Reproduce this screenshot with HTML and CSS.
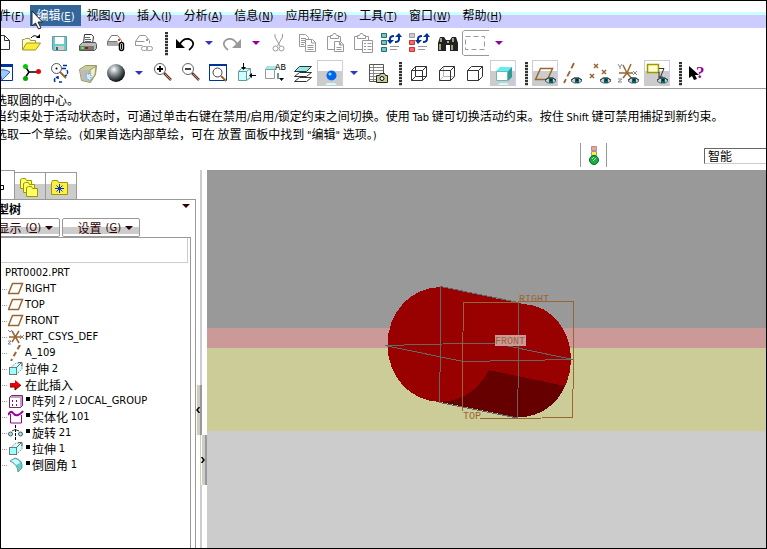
FILE: index.html
```html
<!DOCTYPE html>
<html lang="zh-CN">
<head>
  <meta charset="utf-8">
  <meta name="viewport" content="width=device-width, initial-scale=1.0">
  <title>PRT0002</title>
  <link rel="stylesheet" href="styles.css">
</head>
<body>

<!-- Shared shapes -->
<svg class="defs" width="0" height="0" aria-hidden="true">
  <defs>
    <radialGradient id="ball" cx="38%" cy="30%" r="70%">
      <stop offset="0" stop-color="#fff"/><stop offset=".35" stop-color="#9aa3a8"/><stop offset=".75" stop-color="#3c4448"/><stop offset="1" stop-color="#111"/>
    </radialGradient>
    <g id="eye">
      <path d="M0 3L3 0h5l3 3-3 2H3z" fill="#ccc" stroke="#666"/>
      <path d="M0 2L3 0h5l3 2" fill="none" stroke="#333"/>
      <rect x="4" y="0" width="4" height="5" fill="#066"/><rect x="5" y="1" width="2" height="2" fill="#033"/>
    </g>
    <g id="lens">
      <path d="M16 15l7 7" stroke="#633" stroke-width="2.500"/><path d="M17 16l6 6" stroke="#c96" stroke-width="1"/>
      <circle cx="12" cy="11" r="5.500" fill="#fff" stroke="#666"/>
    </g>
    <g id="sync">
      <path d="M13 14v-3q0-3 4-3" fill="none" stroke="#039" stroke-width="2"/><path d="M10 12h7l-4 4z" fill="#039"/>
      <path d="M22 7v4q0 3-4 3" fill="none" stroke="#039" stroke-width="2"/><path d="M18 9h7l-3-4z" fill="#039"/>
      <path d="M13 18.500h9M13 21.500h7" stroke="#999"/>
    </g>
    <g id="plane"><path d="M4.500 2.500h10l-4 10h-10z" fill="none" stroke="#963" stroke-width="1.500"/></g>
    <g id="extrude">
      <path d="M2 7l6-5h6v6l-5 5" fill="#cff" stroke="#999" stroke-dasharray="2 1"/>
      <rect x="1.500" y="6.500" width="7" height="7" fill="#9ff" stroke="#777"/>
      <path d="M8 7l5-5M10 1.500h4v4" fill="none" stroke="#666"/>
    </g>
  </defs>
</svg>

<div class="window">

  <!-- Menu bar -->
  <nav class="menubar">
    <button class="menu">文件<span class="latin">(<u>F</u>)</span></button>
    <button class="menu active">编辑<span class="latin">(<u>E</u>)</span></button>
    <button class="menu">视图<span class="latin">(<u>V</u>)</span></button>
    <button class="menu">插入<span class="latin">(<u>I</u>)</span></button>
    <button class="menu">分析<span class="latin">(<u>A</u>)</span></button>
    <button class="menu">信息<span class="latin">(<u>N</u>)</span></button>
    <button class="menu">应用程序<span class="latin">(<u>P</u>)</span></button>
    <button class="menu">工具<span class="latin">(<u>T</u>)</span></button>
    <button class="menu">窗口<span class="latin">(<u>W</u>)</span></button>
    <button class="menu">帮助<span class="latin">(<u>H</u>)</span></button>
    <svg class="cursor" width="13" height="20"><path d="M1 1v15l3.500-3 3 6 2.500-1-3-6h4.500z" fill="#fff" stroke="#222"/></svg>
  </nav>

  <!-- Toolbar: file and edit -->
  <div class="toolbar">
    <button class="tool" aria-label="新建"><svg viewBox="0 0 28 30"><path d="M6.500 7.500h9l5 5v9h-14zM15.500 7.500v5h5" fill="#fff" stroke="#333"/></svg></button>
    <button class="tool" aria-label="打开"><svg viewBox="0 0 28 30"><path d="M5.500 21.500v-10h2l1-1h4l1 2h5v3" fill="#ffc" stroke="#993"/><path d="M5.500 22l4-7h14l-5 7z" fill="#fe3" stroke="#993"/><path d="M14 10q3-4 7-1" fill="none" stroke="#000"/><path d="M19 10h4V6z"/></svg></button>
    <button class="tool" aria-label="保存"><svg viewBox="0 0 28 30"><path d="M7.500 8.500h14v14h-13l-1-1z" fill="#6cc" stroke="#699"/><rect x="10" y="9" width="9" height="7" fill="#fff"/><rect x="10" y="18" width="9" height="4" fill="#ccc"/><rect x="11" y="19" width="2" height="3" fill="#366"/></svg></button>
    <button class="tool" aria-label="打印"><svg viewBox="0 0 28 30"><path d="M10.500 15.500l1-9h7l2 2-1 7z" fill="#fff" stroke="#333"/><path d="M12 9.500h5M12 11.500h6M12 13.500h6" stroke="#666"/><path d="M6.500 17.500l3-3h13l1 2v4l-2 2h-15z" fill="#bbb" stroke="#555"/><path d="M7 18h14v4H7z" fill="#777"/><rect x="8" y="19" width="3" height="2" fill="#3f3"/><rect x="12" y="19" width="3" height="2" fill="#c00"/></svg></button>
    <button class="tool" aria-label="附加"><svg viewBox="0 0 28 30"><path d="M6.500 17.500v-4l4-6h6l4 5v3M6.500 13.500h10" fill="#fff" stroke="#777"/><path d="M7 14h9l3 2v2H7z" fill="#aaa"/><rect x="17" y="11" width="2" height="2" fill="#e30"/><rect x="18.500" y="14.500" width="4" height="8" rx="2" fill="#fff" stroke="#000" stroke-width="1.500"/><path d="M20.500 16v5" stroke="#000"/></svg></button>
    <button class="tool" aria-label="链接"><svg viewBox="0 0 28 30"><path d="M6.500 17.500v-4l4-6h6l4 5v3M6.500 13.500h9M6.500 17.500h7" fill="none" stroke="#999"/><rect x="17" y="11" width="2" height="2" fill="#999"/><rect x="12.500" y="18.500" width="6" height="4" rx="2" fill="#fff" stroke="#999"/><rect x="17.500" y="18.500" width="6" height="4" rx="2" fill="none" stroke="#999"/></svg></button>
    <span class="grip"></span>
    <button class="tool" aria-label="撤消"><svg viewBox="0 0 28 30"><path d="M9 16q3-6 9-5 5 2 4 6-1 3-4 5" fill="none" stroke="#000" stroke-width="1.800"/><path d="M5 11v9h9z"/></svg></button>
    <button class="drop" aria-label="撤消列表"></button>
    <button class="tool" aria-label="重做"><svg viewBox="0 0 28 30"><path d="M19 16q-3-6-9-5-5 2-4 6 1 3 4 5" fill="none" stroke="#999" stroke-width="1.800"/><path d="M23 11v9h-9z" fill="#999"/></svg></button>
    <button class="drop purple" aria-label="重做列表"></button>
    <button class="tool" aria-label="剪切"><svg viewBox="0 0 28 30" fill="none" stroke="#999"><path d="M10 6v3l5 9M17.500 6v3l-5 9"/><circle cx="10.500" cy="20.500" r="2.500"/><circle cx="16.500" cy="20.500" r="2.500"/></svg></button>
    <button class="tool" aria-label="复制"><svg viewBox="0 0 28 30" fill="#fff" stroke="#999"><path d="M6.500 6.500h6l3 3v9h-9z"/><path d="M8 10.500h5M8 12.500h6M8 14.500h6M8 16.500h3"/><path d="M12.500 11.500h7l3 3v9h-10zM18.500 12v3h4"/><path d="M14.500 17.500h6M14.500 19.500h6M14.500 21.500h6"/></svg></button>
    <button class="tool" aria-label="粘贴"><svg viewBox="0 0 28 30" fill="#fff" stroke="#999"><path d="M6.500 8.500h13v13h-13z"/><path d="M9.500 10.500v-3h2l1-2h2l1 2h2v3z"/><path d="M13.500 13.500h6l3 3v7h-9zM18.500 14v3h4M15.500 19.500h5M15.500 21.500h5"/></svg></button>
    <button class="tool" aria-label="选择性粘贴"><svg viewBox="0 0 28 30" fill="#fff" stroke="#999"><path d="M5.500 8.500h14v13h-14z"/><path d="M8.500 10.500v-3h2l1-2h2l1 2h2v3z"/><path d="M13.500 12.500h10v12h-10z"/><path d="M15 15.500h2M15 18.500h2M15 21.500h2M18.500 15.500h4M18.500 18.500h4M18.500 21.500h4"/></svg></button>
    <button class="tool" aria-label="再生"><svg viewBox="0 0 28 30"><path d="M4.500 5.500h5v4h-5zM4.500 12.500h5v4h-5zM4.500 19.500h5v4h-5z" fill="#6cc" stroke="#366"/><use href="#sync"/></svg></button>
    <button class="tool" aria-label="再生管理器"><svg viewBox="0 0 28 30"><path d="M4.500 5.500h5v4h-5z" fill="#ccc" stroke="#999"/><path d="M4.500 12.500h5v4h-5zM4.500 19.500h5v4h-5z" fill="#f66" stroke="#c33"/><use href="#sync"/></svg></button>
    <button class="tool" aria-label="查找"><svg viewBox="0 0 28 30"><path d="M7 9h4l2 3h4l2-3h4l2 6v8h-8v-6h-4v6H5v-8z" fill="#222"/><path d="M8 10v4M7 16v6M20 10v4M19 17v5" stroke="#cc9" stroke-width="1.500"/><path d="M14 13h2v2h-2z" fill="#aaa"/></svg></button>
    <button class="tool" aria-label="选取框"><svg viewBox="0 0 28 30" fill="none" stroke="#999"><path d="M28 2.500H3l-1.500 1.500v22L3 27.500h25"/><path d="M4.500 8.500h19v13h-19z" stroke-dasharray="5 3"/></svg></button>
    <button class="drop purple" aria-label="选取框列表"></button>
  </div>

  <!-- Toolbar: view and datum display -->
  <div class="toolbar">
    <button class="tool" aria-label="草绘"><svg viewBox="0 0 28 30"><path d="M5.500 7.500h18v15h-18z" fill="#fff" stroke="#039"/><path d="M5 6h19v3H5z" fill="#039"/><path d="M9 13q6-3 12 1l-8 8q-1-6-4-9z" fill="#9cf" stroke="#36c"/></svg></button>
    <button class="tool" aria-label="连接"><svg viewBox="0 0 28 30"><path d="M8 8l4 6-4 6M12 14h8" fill="none" stroke="#000" stroke-width="1.500"/><circle cx="8.500" cy="8.500" r="2.500" fill="#0c0"/><circle cx="8.500" cy="20.500" r="2.500" fill="#0a0"/><circle cx="21.500" cy="13.500" r="2.500" fill="#e00"/></svg></button>
    <button class="tool" aria-label="重画"><svg viewBox="0 0 28 30"><circle cx="11.500" cy="10.500" r="5" fill="#fff" stroke="#555"/><circle cx="11.500" cy="10.500" r="1"/><path d="M15 14l6 6" stroke="#963" stroke-width="2"/><path d="M18 7.500h5M17 10.500h5M22 12q2 4-2 6M10 24q-2-4 3-5M13 18v3M14 24h3" fill="none" stroke="#039" stroke-width="1.500" stroke-dasharray="4 1"/></svg></button>
    <button class="tool" aria-label="外观"><svg viewBox="0 0 28 30"><path d="M6.500 11.500l6-4h11l-1 9-5 8-9-2z" fill="#cc9" stroke="#996"/><path d="M7 12h10v11l-8-1z" fill="#bbb"/><path d="M17 12l6-4-1 9-5 6z" fill="#eec" stroke="#996"/><path d="M13 16h5v7l-4-2z" fill="#cef" stroke="#69c" stroke-dasharray="1 1"/></svg></button>
    <button class="tool" aria-label="外观库"><svg viewBox="0 0 28 30"><circle cx="15" cy="15" r="9" fill="url(#ball)"/></svg></button>
    <button class="drop" aria-label="外观列表"></button>
    <button class="tool" aria-label="放大"><svg viewBox="0 0 28 30"><use href="#lens"/><path d="M9 11h6M12 8v6" stroke="#000" stroke-width="1.800"/></svg></button>
    <button class="tool" aria-label="缩小"><svg viewBox="0 0 28 30"><use href="#lens"/><path d="M9 11h6" stroke="#000" stroke-width="1.500"/></svg></button>
    <button class="tool" aria-label="重新调整"><svg viewBox="0 0 28 30"><path d="M5.500 6.500h17v16h-17z" fill="#fff" stroke="#039"/><path d="M5 6h18v2H5z" fill="#039"/><circle cx="13.500" cy="14.500" r="4.500" fill="#fff" stroke="#444"/><path d="M17 18l5 5" stroke="#963" stroke-width="2"/></svg></button>
    <button class="tool" aria-label="重定向"><svg viewBox="0 0 28 30"><path d="M6.500 13.500h8v9h-8zM6.500 13.500l3-3h9l-4 3M14.500 22.500l4-3v-9" fill="#cff" stroke="#699"/><path d="M11.500 5v6M19 17.500h5" stroke="#000"/><path d="M9 9h5l-2.500 3zM20 15v5l-3-2.500z"/></svg></button>
    <button class="tool" aria-label="保存的视图"><svg viewBox="0 0 28 30"><path d="M5.500 11.500h9v9h-9zM5.500 11.500l2-3h7" fill="#fff" stroke="#999"/><path d="M6 11h9l2-3H8z" fill="#9ee"/><path d="M17 15h2v6h-2z" fill="#699"/><text class="icon-text" x="15" y="12">AB</text><path d="M19 20h5l-2.500 3z"/></svg></button>
    <button class="tool" aria-label="层"><svg viewBox="0 0 28 30" stroke="#333"><path d="M6.500 23.500l5-4h12l-5 4z" fill="#fff"/><path d="M6.500 18.500l5-4h12l-5 4z" fill="#fff"/><path d="M6.500 13.500l5-5h12l-5 5z" fill="#8ee"/></svg></button>
    <button class="tool pressed" aria-label="视图管理器"><svg viewBox="0 0 28 30"><path d="M9 27l2-2h8l2 2z" fill="#cff"/><circle cx="15.500" cy="17.500" r="5" fill="#06e"/><circle cx="14" cy="16" r="1.500" fill="#9df"/></svg></button>
    <button class="drop" aria-label="视图列表"></button>
    <button class="tool" aria-label="快照"><svg viewBox="0 0 28 30"><path d="M6.500 6.500h14v17h-14z" fill="#fff" stroke="#555"/><path d="M7 9.500h13M7 12.500h13M7 15.500h13M7 18.500h8M7 21.500h6M10.500 7v16" stroke="#888"/><path d="M13.500 17.500h3l1-2h4l1 2h2v7h-11z" fill="#cc9" stroke="#222"/><circle cx="19" cy="20.500" r="2" fill="#fff" stroke="#000"/></svg></button>
    <span class="grip"></span>
    <button class="tool" aria-label="线框"><svg viewBox="0 0 28 30" fill="none" stroke="#333"><path d="M6.500 12.500h11v10h-11zM6.500 12.500l4-4h11l-4 4M17.500 22.500l4-4v-10M10.500 8.500v10h11M10.500 18.500l-4 4"/></svg></button>
    <button class="tool" aria-label="隐藏线"><svg viewBox="0 0 28 30" fill="none" stroke="#333"><path d="M10.500 8.500v10h11M10.500 18.500l-4 4" stroke="#bbb"/><path d="M6.500 12.500h11v10h-11zM6.500 12.500l4-4h11l-4 4M17.500 22.500l4-4v-10"/></svg></button>
    <button class="tool" aria-label="无隐藏线"><svg viewBox="0 0 28 30" fill="none" stroke="#333"><path d="M6.500 12.500h11v10h-11zM6.500 12.500l4-4h11l-4 4M17.500 22.500l4-4v-10"/></svg></button>
    <button class="tool pressed" aria-label="着色"><svg viewBox="0 0 28 30"><path d="M7 13l4-4h12l-4 4z" fill="#6ee"/><path d="M7.500 13.500h11v9h-11z" fill="#fff" stroke="#6bb"/><path d="M19 13l4-4v10l-4 4z" fill="#399"/><path d="M9 27h11l-2-2h-7z" fill="#cff"/></svg></button>
    <span class="grip"></span>
    <button class="tool pressed" aria-label="基准平面"><svg viewBox="0 0 28 30"><path d="M9.500 10.500h12l-5 11h-12z" fill="none" stroke="#963" stroke-width="1.500"/><use href="#eye" x="14" y="20"/></svg></button>
    <button class="tool" aria-label="基准轴"><svg viewBox="0 0 28 30"><path d="M15 5L5 25" stroke="#963" stroke-width="1.800" stroke-dasharray="6 3"/><use href="#eye" x="12" y="20"/></svg></button>
    <button class="tool" aria-label="基准点"><svg viewBox="0 0 28 30"><path d="M7 6l4 4M11 6l-4 4M15 12l4 4M19 12l-4 4M3 16l4 4M7 16l-4 4" stroke="#963" stroke-width="1.500"/><use href="#eye" x="13" y="20"/></svg></button>
    <button class="tool" aria-label="坐标系"><svg viewBox="0 0 28 30"><path d="M12 15l4-9M12 15l-4-8M12 15H4M12 15l6 7M12 15l-4 5M12 15h6" stroke="#963" stroke-width="1.500"/><path d="M3 6l2 3 2-3M5 9v2M18 13l4 4M22 13l-4 4M3 21h4l-4 3h4" fill="none" stroke="#888"/><use href="#eye" x="13" y="20"/></svg></button>
    <button class="tool pressed" aria-label="注释显示"><svg viewBox="0 0 28 30"><path d="M4.500 6.500h11v8h-11z" fill="#ffc" stroke="#990" stroke-width="1.500"/><path d="M16 10.500h5L17 20M16 14v6M16 19h4" fill="none" stroke="#333"/><use href="#eye" x="14" y="20"/></svg></button>
    <span class="grip"></span>
    <button class="tool" aria-label="上下文帮助"><svg viewBox="0 0 28 30"><path d="M4 8v12l3-2 2 4 3-1-2-4h4z"/><text class="help-text" x="11" y="20">?</text></svg></button>
  </div>

  <!-- Prompt messages -->
  <div class="messages">
    <p>选取圆的中心。</p>
    <p>当约束处于活动状态时，可通过单击右键在禁用<span class="latin">/</span>启用<span class="latin">/</span>锁定约束之间切换。使用 <span class="latin">Tab</span> 键可切换活动约束。按住 <span class="latin">Shift</span> 键可禁用捕捉到新约束。</p>
    <p>选取一个草绘。<span class="latin">(</span>如果首选内部草绘，可在 放置 面板中找到 <span class="latin">"</span>编辑<span class="latin">"</span> 选项。<span class="latin">)</span></p>
  </div>

  <div class="statusbar">
    <span class="light">
      <svg width="12" height="20" viewBox="0 0 12 20"><path d="M3.500.500h5v4h-5z" fill="#f99" stroke="#999"/><path d="M3.500 5.500h5v4h-5z" fill="#fe3" stroke="#999"/><circle cx="6" cy="14" r="4.500" fill="#2a4" stroke="#063"/><path d="M4 13l2-2M5 15l3-3" stroke="#9e9"/></svg>
    </span>
    <select class="filter" aria-label="过滤器"><option>智能</option></select>
  </div>

  <!-- Work area -->
  <div class="work">
    <aside class="side">
      <div class="tabs">
        <button class="tab current" aria-label="模型树"><svg width="28" height="25"><path d="M15.500 12.500h4v4h-4z" fill="#fff" stroke="#000"/></svg></button>
        <button class="tab" aria-label="文件夹"><svg width="28" height="25" stroke="#990"><path d="M5.500 14.500v-9l2-1h3l1 2h5v8z" fill="#ff6"/><path d="M8.500 18.500v-9l2-1h3l1 2h5v8z" fill="#ff6"/><path d="M11.500 22.500v-9l2-1h3l1 2h5v8z" fill="#ff6"/></svg></button>
        <button class="tab" aria-label="收藏夹"><svg width="28" height="25"><path d="M5.500 20.500v-12l1-2h5l1 2h9v12z" fill="#fe4" stroke="#990"/><path d="M13.500 10v9M9 14.500h9M10.500 11.500l6 6M16.500 11.500l-6 6" stroke="#03c"/></svg></button>
      </div>
      <div class="panel">
        <div class="title"><h2>模型树</h2><span class="caret"></span></div>
        <div class="actions">
          <button class="action">显示<span class="latin">(<u>O</u>)</span><span class="caret"></span></button>
          <button class="action">设置<span class="latin">(<u>G</u>)</span><span class="caret"></span></button>
        </div>
        <div class="tree-box">
          <input class="search" type="text" aria-label="搜索">
          <ul class="tree">
            <li class="root"><span class="latin">PRT0002.PRT</span></li>
            <li><svg class="node"><use href="#plane"/></svg><span class="latin">RIGHT</span></li>
            <li><svg class="node"><use href="#plane"/></svg><span class="latin">TOP</span></li>
            <li><svg class="node"><use href="#plane"/></svg><span class="latin">FRONT</span></li>
            <li><svg class="node"><path d="M1 8h13M4 2l7 12M11 2L4 13" stroke="#963" stroke-width="1.500"/><path d="M0 1l2 2 2-2M12 6l4 4M16 6l-4 4M0 12h3l-3 3h3" fill="none" stroke="#888"/></svg><span class="latin">PRT_CSYS_DEF</span></li>
            <li><svg class="node"><path d="M12 0L3 16" stroke="#963" stroke-width="2" stroke-dasharray="5 3"/></svg><span class="latin">A_109</span></li>
            <li><svg class="node"><use href="#extrude"/></svg>拉伸&nbsp;<span class="latin">2</span></li>
            <li><svg class="node"><path d="M2 6h5V3l6 5-6 5v-3H2z" fill="#e00"/><path d="M2 10h5v3l6-5" fill="none" stroke="#600"/></svg>在此插入</li>
            <li><svg class="node"><path d="M1.500 4.500l2-2h11v10l-2 2h-11z" fill="#c9c" stroke="#636"/><path d="M2 5h10v9H2z" fill="#fff"/><path d="M4 7h1v2H4zM8 7h1v2H8zM4 11h1v2H4zM8 11h1v2H8z" fill="#909"/></svg><i class="mark"></i>阵列&nbsp;<span class="latin">2 / LOCAL_GROUP</span></li>
            <li><svg class="node"><path d="M2.500 5v9h11V6" fill="#fff" stroke="#909"/><path d="M0 6q3-5 5-2t5 2 5-4" fill="none" stroke="#909" stroke-width="2"/></svg><i class="mark"></i>实体化&nbsp;<span class="latin">101</span></li>
            <li><svg class="node"><path d="M7.500 0v16" stroke="#000" stroke-dasharray="3 1"/><circle cx="2.500" cy="9" r="2" fill="#9ee" stroke="#555"/><circle cx="12.500" cy="9" r="2" fill="#9ee" stroke="#555"/><path d="M4 6q3-3 7 0" fill="none" stroke="#333"/></svg><i class="mark"></i>旋转&nbsp;<span class="latin">21</span></li>
            <li><svg class="node"><use href="#extrude"/></svg><i class="mark"></i>拉伸&nbsp;<span class="latin">1</span></li>
            <li><svg class="node"><path d="M2 4l5-3q8 2 7 10l-4 4q0-7-8-11z" fill="#6cc" stroke="#699"/><path d="M3 4l4-2q4 1 5 4l-4 2q-2-3-5-4z" fill="#cff"/></svg><i class="mark"></i>倒圆角&nbsp;<span class="latin">1</span></li>
          </ul>
        </div>
      </div>
    </aside>

    <div class="splitter">
      <button class="handle" aria-label="收起"><svg width="4" height="6"><path d="M3.500 0L1 3l2.500 3" fill="none" stroke="#000" stroke-width="1.500"/></svg></button>
      <button class="handle right" aria-label="展开"><svg width="4" height="6"><path d="M.500 0L3 3 .500 6" fill="none" stroke="#000" stroke-width="1.500"/></svg></button>
    </div>

    <!-- 3D view -->
    <main class="canvas">
      <svg class="model" width="200" height="145" viewBox="0 0 200 145">
        <path d="M61 7L138 23 146 24.300C171 26 191 50 191 79C191 112 168 137 138 137.500L61 122C30 122 7.500 96 7.500 65C7.500 33 30 7 61 7z" fill="#900"/>
        <path d="M109 90L185 106C177 125 160 137 138 137.500L60 122Q92 121 109 90z" fill="#600"/>
        <g fill="none" stroke="#666">
          <path d="M60.500 6v57l-1 59M138.500 22v58l-1 58M60.500 6.500l78 16M59.500 122.500l78 15.500"/>
          <path d="M5 65.500l77-2h34M128 66l65 13.500M5 65.500l78 16 110-2"/>
        </g>
        <path d="M82.500 131V83l1-60.500 110-1v60l-1 56-92 1.500" fill="none" stroke="#963"/>
        <rect x="115" y="55" width="31" height="11" fill="#c99"/>
        <g class="datum"><text x="139" y="22">RIGHT</text><text x="115" y="64">FRONT</text><text x="83" y="139">TOP</text></g>
      </svg>
    </main>
  </div>
</div>
</body>
</html>
```
FILE: styles.css
```css
/* -------------------- Base -------------------- */
* { box-sizing: border-box; }
body {
  margin: 0;
  background: #fff;
  color: #000;
  font: 12px/16px "Noto Sans CJK SC", sans-serif;
}
button {
  border: 0;
  padding: 0;
  background: none;
  color: inherit;
  font: inherit;
}
.defs { position: absolute; }
.latin {
  font-family: "DejaVu Sans Condensed", "Noto Sans", sans-serif;
  font-size: 11px;
}

.window {
  display: flex;
  flex-direction: column;
  min-height: 100vh;
  border: 1px solid #000;
  overflow: hidden;
}

/* -------------------- Menu bar -------------------- */
.menubar {
  position: relative;
  display: flex;
  height: 27px;
  padding: 4px 0 2px;
  background: linear-gradient(#fff 11px, #cff 11px, #cff 14px, #ccf 14px);
}
.menu {
  flex: none;
  padding: 0 6px;
  white-space: nowrap;
}
.menu:first-child { margin-left: -20px; }
.menu.active {
  background: #369;
  color: #fff;
}
.cursor {
  position: absolute;
  left: 30px;
  top: 9px;
}

/* -------------------- Toolbars -------------------- */
.toolbar {
  display: flex;
  height: 30px;
  margin-left: -12px;
}
.tool {
  flex: none;
  width: 28px;
  height: 30px;
}
.tool svg {
  display: block;
  width: 28px;
  height: 30px;
}
.pressed {
  background:
    linear-gradient(90deg, #ccc 1px, transparent 1px, transparent 25px, #ccf 25px) 1px 2px / 26px 26px no-repeat,
    linear-gradient(#ccc 1px, #fff 1px, #fff 11px, #ccc 11px) 1px 2px / 26px 26px no-repeat;
}
.grip {
  flex: none;
  width: 3px;
  height: 24px;
  margin: 4px 3px 2px 8px;
  background: repeating-linear-gradient(#333 0 2px, #ccc 2px 3px);
}
.drop {
  flex: none;
  width: 19px;
  color: #33c;
}
.drop.purple { color: #909; }
.drop::before {
  content: "";
  display: block;
  width: 0;
  margin: 0 auto;
  border: 4px solid transparent;
  border-top-color: currentColor;
  border-bottom: 0;
}
.icon-text {
  font: 9px "Liberation Mono", monospace;
}
.help-text {
  font: bold 17px "Liberation Serif", serif;
  fill: #909;
}

/* -------------------- Messages -------------------- */
.messages {
  height: 53px;
  padding-top: 3px;
  border-top: 1px solid #999;
  white-space: nowrap;
}
.messages p {
  margin: 0 0 0 -6px;
}
.statusbar {
  display: flex;
  justify-content: flex-end;
  height: 29px;
  padding-top: 2px;
}
.light {
  width: 27px;
  height: 24px;
  margin-right: 97px;
  padding: 3px 7px;
  border: solid #999;
  border-width: 0 1px;
}
.filter {
  appearance: none;
  width: 62px;
  height: 16px;
  margin-top: 5px;
  padding: 0 3px;
  border: 1px solid #666;
  border-right: 0;
  border-bottom-color: #ccc;
  border-radius: 0;
  background: #fff;
  color: #000;
  font: 12px/14px "Noto Sans CJK SC", sans-serif;
}

/* -------------------- Side panel -------------------- */
.work {
  display: flex;
  flex: 1;
}
.side {
  display: flex;
  flex-direction: column;
  flex: none;
  width: 195px;
}
.tabs {
  display: flex;
  align-items: flex-end;
  height: 29px;
  margin-left: -17px;
}
.tab {
  width: 31px;
  height: 27px;
  border: 1px solid #999;
  border-left: 0;
  border-bottom: 0;
  background: linear-gradient(#fff 11px, #ccc 11px);
}
.tab.current {
  height: 29px;
  background: #fff;
}
.tab svg { display: block; }
.panel {
  display: flex;
  flex-direction: column;
  flex: 1;
  border-top: 1px solid #999;
  border-right: 1px solid #999;
}
.title {
  display: flex;
  justify-content: space-between;
  height: 18px;
  margin-left: -16px;
  padding: 1px 5px 0 0;
}
.title h2 {
  margin: 0;
  font-size: 12px;
  line-height: 16px;
}
.caret {
  height: 4px;
  border: 4px solid transparent;
  border-top-color: #300;
  border-bottom: 0;
}
.title .caret { margin-top: 3px; }
.actions {
  display: flex;
  gap: 2px;
  margin-left: -19px;
}
.action {
  display: flex;
  align-items: center;
  justify-content: flex-end;
  gap: 4px;
  width: 78px;
  height: 19px;
  padding-right: 6px;
  border: 1px solid #999;
  border-radius: 2px;
  background: linear-gradient(#fff 8px, #ccc 8px, #ccc 15px, #fff 15px);
  color: #300;
}
.tree-box {
  flex: 1;
  margin-right: 4px;
  border-top: 1px solid #999;
  border-right: 1px solid #999;
}
.search {
  display: block;
  width: calc(100% - 2px);
  height: 25px;
  border: 0;
  border-right: 1px solid #ccc;
  border-bottom: 1px solid #ccc;
}
.tree {
  margin: 0;
  padding: 2px 0 0;
  list-style: none;
}
.tree li {
  display: flex;
  align-items: center;
  height: 16px;
  padding-left: 1px;
  white-space: nowrap;
}
.tree li::before {
  content: "";
  width: 5px;
  border-top: 1px dotted #999;
}
.tree .root { padding-left: 4px; }
.tree .root::before { display: none; }
.node {
  width: 16px;
  height: 16px;
  margin: 0 1px;
}
.mark {
  width: 4px;
  height: 4px;
  margin: 0 2px 4px 1px;
  background: #000;
}

/* -------------------- Splitter -------------------- */
.splitter {
  flex: none;
  width: 11px;
  padding-top: 215px;
  background: linear-gradient(90deg, #fff 4px, #ccc 4px, #ccc 6px, #fff 6px);
}
.handle {
  display: flex;
  align-items: center;
  width: 6px;
  height: 50px;
  background: linear-gradient(90deg, #ffc 1px, #ccc 1px, #ccc 4px, #999 4px);
}
.handle.right { margin-left: 5px; }

/* -------------------- 3D view -------------------- */
.canvas {
  flex: 1;
  background: linear-gradient(#999 158px, #c99 158px, #c99 178px, #cc9 178px, #cc9 261px, #ccc 261px);
}
.model {
  display: block;
  margin: 110px 0 0 173px;
  shape-rendering: crispEdges;
}
.datum {
  fill: #963;
  font: 10px "Liberation Mono", monospace;
}
```
